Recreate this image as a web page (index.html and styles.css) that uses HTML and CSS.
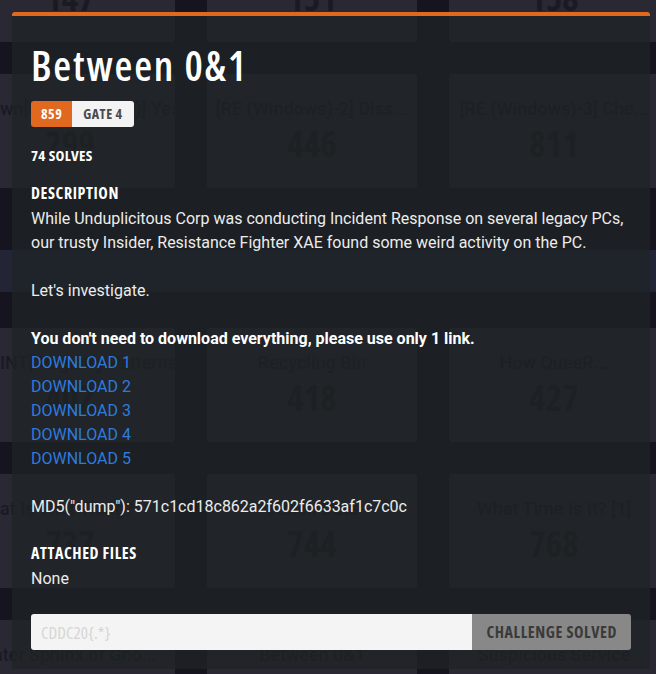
FILE: index.html
```html
<!DOCTYPE html>
<html lang="en">
<head>
<meta charset="utf-8">
<title>Between 0&amp;1</title>
<link rel="stylesheet" href="styles.css">
</head>
<body>
<div class="board">
  <div class="grid grid-top">
    <div class="card"><div class="ct">[RE (Linux)-1] Hello</div><div class="cn">147</div></div>
    <div class="card"><div class="ct">[RE (Linux)-2] Stack</div><div class="cn">151</div></div>
    <div class="card"><div class="ct">[RE (Linux)-3] Heap</div><div class="cn">158</div></div>
    <div class="card"><div class="ct ct-left">wn[RE (Unknown)] Yes</div><div class="cn">299</div></div>
    <div class="card"><div class="ct">[RE (Windows)-2] Diss...</div><div class="cn">446</div></div>
    <div class="card"><div class="ct">[RE (Windows)-3] Che...</div><div class="cn">811</div></div>
  </div>
  <div class="band"></div>
  <div class="grid">
    <div class="card"><div class="ct ct-left">INT] Registry Patterns...</div><div class="cn">402</div></div>
    <div class="card"><div class="ct">Recycling Bin</div><div class="cn">418</div></div>
    <div class="card"><div class="ct">How QueeR...</div><div class="cn">427</div></div>
    <div class="card"><div class="ct ct-left">at Is That Thing?</div><div class="cn">737</div></div>
    <div class="card"><div class="ct">Stolen Data</div><div class="cn">744</div></div>
    <div class="card"><div class="ct">What Time Is It? [1]</div><div class="cn">768</div></div>
    <div class="card"><div class="ct">Later Sphinx of Gno...</div><div class="cn">801</div></div>
    <div class="card"><div class="ct">Between 0&amp;1</div><div class="cn">859</div></div>
    <div class="card"><div class="ct">Suspicious Service</div><div class="cn">862</div></div>
  </div>
</div>

<div class="modal">
  <h2 class="title">Between 0&amp;1</h2>
  <div class="badges">
    <span class="badge pts">859</span>
    <span class="badge gate">GATE 4</span>
  </div>
  <div class="solves">74 SOLVES</div>
  <div class="label">DESCRIPTION</div>
  <div class="desc">
    <p>While Unduplicitous Corp was conducting Incident Response on several legacy PCs, our trusty Insider, Resistance Fighter XAE found some weird activity on the PC.</p>
    <p>Let's investigate.</p>
    <p><strong>You don't need to download everything, please use only 1 link.</strong><br>
      <a href="#">DOWNLOAD 1</a><br>
      <a href="#">DOWNLOAD 2</a><br>
      <a href="#">DOWNLOAD 3</a><br>
      <a href="#">DOWNLOAD 4</a><br>
      <a href="#">DOWNLOAD 5</a></p>
    <p>MD5("dump"): 571c1cd18c862a2f602f6633af1c7c0c</p>
  </div>
  <div class="label label-files">ATTACHED FILES</div>
  <div class="desc">None</div>
  <form class="flag">
    <input class="flag-input" type="text" placeholder="CDDC20{.*}">
    <button class="flag-btn" type="button">CHALLENGE SOLVED</button>
  </form>
</div>
</body>
</html>
```

FILE: styles.css
```css
html, body {
  margin: 0;
  padding: 0;
  overflow: hidden;
  height: 100%;
}
body {
  background: #16151f;
  font-family: Roboto, "Liberation Sans", sans-serif;
  position: relative;
}

/* background board */
.board {
  width: 656px;
}
.grid {
  display: grid;
  grid-template-columns: repeat(3, 210px);
  grid-auto-rows: 114px;
  gap: 32px;
  margin-left: -35px;
  width: 694px;
}
.grid-top {
  margin-top: -72px;
}
.band {
  height: 42px;
  margin: 62px 0 36px;
  background: #232536;
}
.card {
  background: #2a2833;
  border-radius: 3px;
  padding-top: 23px;
  text-align: center;
  color: #1b1a23;
  overflow: hidden;
}
.ct {
  font: 500 18px/24px Roboto, sans-serif;
  white-space: nowrap;
  padding: 0 8px;
  overflow: hidden;
}
.ct-left {
  text-align: left;
  padding-left: 35px;
}
.cn {
  margin-top: 2px;
  font-family: "Open Sans", sans-serif;
  font-stretch: 75%;
  font-weight: 700;
  font-size: 35px;
  line-height: 42px;
}

/* modal */
.modal {
  position: absolute;
  left: 12px;
  top: 12px;
  width: 638px;
  box-sizing: border-box;
  background: rgba(30, 36, 37, 0.72);
  border-top: 4px solid #e0691f;
  border-radius: 3px 3px 0 0;
  padding: 25px 19px 19px;
  color: #fff;
}
.title {
  margin: 0;
  font-family: "Open Sans", sans-serif;
  font-stretch: 75%;
  font-weight: 600;
  font-size: 41px;
  line-height: 48px;
  letter-spacing: 1.8px;
  color: #fff;
}
.badges {
  display: flex;
  margin-top: 12px;
}
.badge {
  height: 26px;
  font-family: "Open Sans", sans-serif;
  font-stretch: 75%;
  font-weight: 700;
  font-size: 14px;
  line-height: 26px;
  letter-spacing: 0.5px;
  padding: 0 10px;
}
.pts {
  background: #e0691f;
  color: #fff;
  border-radius: 3px 0 0 3px;
}
.gate {
  background: #f3f3f3;
  color: #4a4a4a;
  padding: 0 11px;
  border-radius: 0 3px 3px 0;
}
.solves, .label {
  font-family: "Open Sans", sans-serif;
  font-stretch: 75%;
  font-weight: 700;
  font-size: 15px;
  line-height: 20px;
  letter-spacing: 0.3px;
  color: #fff;
  margin-top: 18px;
}
.label {
  font-size: 16px;
  letter-spacing: 0.6px;
  margin-bottom: 4px;
}
.label-files {
  margin-top: 24px;
}
.desc {
  font: 400 16px/24px Roboto, sans-serif;
  color: #ececec;
}
.desc p {
  margin: 0 0 24px;
}
.desc p:last-child {
  margin-bottom: 0;
}
.desc strong {
  color: #fff;
  font-weight: 700;
}
.desc a {
  color: #2e7bdf;
  text-decoration: none;
}
.flag {
  display: flex;
  margin: 23px 0 0;
  height: 36px;
}
.flag-input {
  flex: 1;
  min-width: 0;
  border: 0;
  outline: none;
  background: #f4f4f4;
  border-radius: 3px 0 0 3px;
  padding: 0 10px;
  font-family: "Open Sans", sans-serif;
  font-stretch: 75%;
  font-size: 17px;
  color: #333;
}
.flag-input::placeholder {
  color: #d6d6d6;
}
.flag-btn {
  border: 0;
  background: #888888;
  color: #3a3a3a;
  font-family: "Open Sans", sans-serif;
  font-stretch: 75%;
  font-weight: 700;
  font-size: 16px;
  letter-spacing: 0.6px;
  padding: 0 14px;
  border-radius: 0 3px 3px 0;
}
```
